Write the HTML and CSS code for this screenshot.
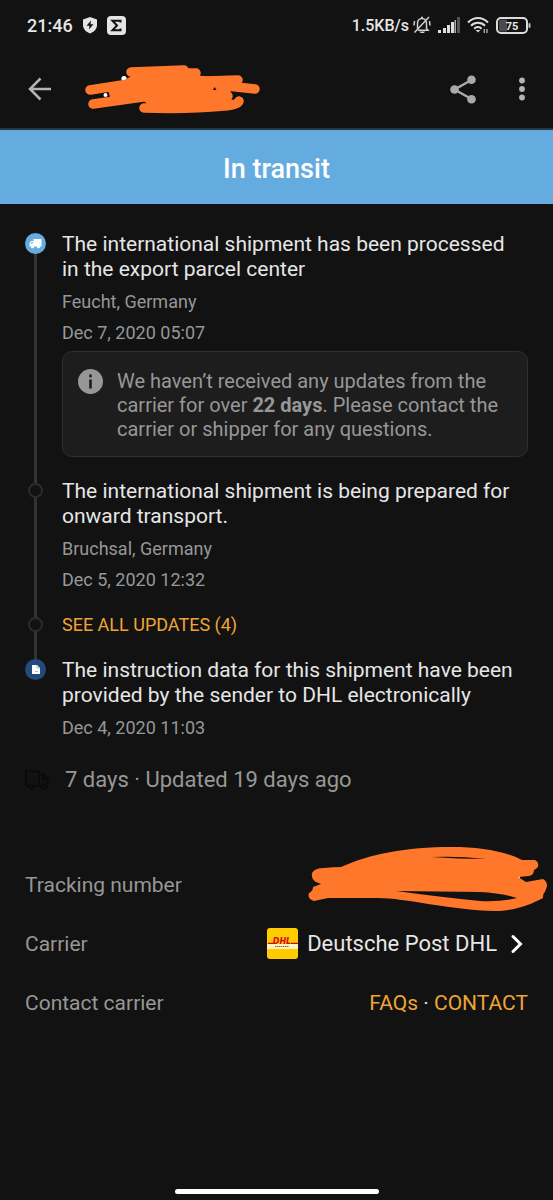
FILE: index.html
```html
<!DOCTYPE html>
<html lang="en">
<head>
<meta charset="utf-8">
<meta name="viewport" content="width=device-width, initial-scale=1">
<title>Shipment tracking</title>
<link rel="stylesheet" href="styles.css">
</head>
<body>
<div class="screen">
  <div class="statusbar">
    <div class="status-left">
      <span class="clock">21:46</span>
      <svg width="16" height="18" viewBox="0 0 16 18"><path d="M8 1 15 3.500V9c0 4-3 7-7 8.500C4 16 1 13 1 9V3.500Z" fill="#e4e4e4"/><path d="M9 4.500 4.500 9.800h3L7 13.500l4.500-5.300h-3Z" fill="#121212"/></svg>
      <svg width="19" height="19" viewBox="0 0 19 19"><rect width="19" height="19" rx="4" fill="#e4e4e4"/><path d="M13.500 6.500V4.800H5.500L10 9.500l-4.500 4.700h8v-1.700" fill="none" stroke="#121212" stroke-width="2"/></svg>
    </div>
    <div class="status-right">
      <span class="speed">1.5KB/s</span>
      <svg width="18" height="18" viewBox="0 0 18 18" fill="none" stroke="#cfcfcf" stroke-width="1.500"><path d="M4.500 12.500V7.500C4.500 4.500 6.500 2.500 9 2.500s4.500 2 4.500 5v5l1.500 1.700H5M8 1.500h2M16 1 1.500 16.500M1.500 5 1 9.500M16.500 5 17 9.500"/><path d="M6.500 15.500h5.500l-1 1.500H7.500Z" fill="#cfcfcf" stroke="none"/></svg>
      <svg width="22" height="16" viewBox="0 0 22 16"><g fill="#dedede"><rect x="0" y="13" width="3" height="3"/><rect x="5" y="11" width="3" height="5"/><rect x="9" y="8" width="3" height="8"/><rect x="13" y="5" width="3" height="11"/></g><rect x="16.500" y="3" width="1.500" height="13" fill="#aaa"/><rect x="19" y="0" width="3" height="16" fill="#555"/></svg>
      <svg width="22" height="18" viewBox="0 0 22 18" fill="none" stroke="#dedede" stroke-width="2"><path d="M1 6.500C7 .5 15 .5 21 6.500M4 9.700c4-4 10-4 14 0M7.200 12.700c2.200-2.200 5.200-2.200 7.400 0"/><path d="m8.700 14 2.300 2.500 2.300-2.500Z" fill="#dedede" stroke="none"/><path d="M17.300 13v4M20 13v4" stroke-width="1.400" stroke="#aaa"/></svg>
      <svg width="35" height="17" viewBox="0 0 35 17"><path d="M5 2.500h6v12H5Q3 14.500 3 12.500v-8Q3 2.500 5 2.500Z" fill="#4a4a4a"/><rect x="1" y="1" width="30" height="15" rx="4" fill="none" stroke="#dcdcdc" stroke-width="2"/><rect x="32.500" y="6" width="2" height="5" rx="1" fill="#bbb"/><text class="battery-text" x="16" y="12.500" text-anchor="middle">75</text></svg>
    </div>
  </div>

  <header class="appbar">
    <button class="icon-button" aria-label="Back"><svg width="24" height="24" viewBox="0 0 24 24" fill="none" stroke="#b4b4b4" stroke-width="2.500"><path d="M23 12H3M12.500 1.500 2 12l10.500 10.500"/></svg></button>
    <svg class="title-scribble" width="176" height="50" viewBox="85 65 176 50">
      <g fill="#fff"><circle cx="124" cy="79.500" r="2.600"/><circle cx="105.500" cy="96" r="2"/></g>
      <path d="M133 76H195L235 81 228 99 238 103 150 108 142 100 110 98 108 91Z" fill="#ff772a"/>
      <g fill="none" stroke="#ff772a" stroke-width="9.500" stroke-linecap="round" stroke-linejoin="round"><path d="M131 73 184 71M150 74h46M140 84l98-3M90 91l45-7M185 83l33 3 37 4M93 105l57-8M144 109c30 1 60 0 80-2q14-1 15-5M160 90l68 7"/></g>
      <path d="m214.500 88 2 3h-3.500Z" fill="#121212"/>
    </svg>
    <button class="icon-button push" aria-label="Share"><svg width="26" height="29" viewBox="0 0 26 29" fill="#a9a9a9"><path d="M21.500 5 4.500 14.500 21.500 24" fill="none" stroke="#a9a9a9" stroke-width="2.500"/><circle cx="21.500" cy="4.800" r="4.300"/><circle cx="4.500" cy="14.500" r="4.300"/><circle cx="21.500" cy="24.200" r="4.300"/></svg></button>
    <button class="icon-button more" aria-label="More options"><svg width="6" height="24" viewBox="0 0 6 24" fill="#b4b4b4"><circle cx="3" cy="3.500" r="2.900"/><circle cx="3" cy="12" r="2.900"/><circle cx="3" cy="20.500" r="2.900"/></svg></button>
  </header>

  <h1 class="banner">In transit</h1>

  <main class="content">
    <ol class="timeline">
      <li class="event">
        <div class="rail rail-first"><span class="dot dot-transit"><svg width="13" height="11" viewBox="0 0 13 11" fill="#fff"><path d="M4.500 1H12.500V8.500H.5V5.500L2 3H4.500Z"/><circle cx="3.500" cy="8.700" r="1.600"/><circle cx="9.500" cy="8.700" r="1.600"/><path d="M2.500 4h1.300v1.500H1.700Z" fill="#66acdf"/></svg></span></div>
        <div class="event-body">
          <h2>The international shipment has been processed in the export parcel center</h2>
          <p class="place">Feucht, Germany</p>
          <p class="date">Dec 7, 2020 05:07</p>
          <div class="note">
            <svg width="25" height="25" viewBox="0 0 25 25"><circle cx="12.500" cy="12.500" r="12.500" fill="#979797"/><rect x="11.200" y="10.500" width="2.600" height="9" fill="#1d1d1d"/><rect x="11.200" y="5.500" width="2.600" height="2.800" fill="#1d1d1d"/></svg>
            <p>We haven’t received any updates from the carrier for over <strong>22 days</strong>. Please contact the carrier or shipper for any questions.</p>
          </div>
        </div>
      </li>
      <li class="event">
        <div class="rail"><span class="dot dot-small"></span></div>
        <div class="event-body">
          <h2>The international shipment is being prepared for onward transport.</h2>
          <p class="place">Bruchsal, Germany</p>
          <p class="date">Dec 5, 2020 12:32</p>
        </div>
      </li>
      <li class="event">
        <div class="rail rail-link"><span class="dot dot-small"></span></div>
        <div class="event-body"><button class="see-all">SEE ALL UPDATES (4)</button></div>
      </li>
      <li class="event">
        <div class="rail rail-last"><span class="dot dot-data"><svg width="8" height="9" viewBox="0 0 8 9"><path d="M0 0h5l3 3v6H0Z" fill="#fff"/><path d="M5 0v3h3M3 6.500h3" fill="none" stroke="#8ba3c0" stroke-width=".7"/></svg></span></div>
        <div class="event-body event-final">
          <h2>The instruction data for this shipment have been provided by the sender to DHL electronically</h2>
          <p class="date">Dec 4, 2020 11:03</p>
        </div>
      </li>
    </ol>

    <p class="summary">
      <svg width="24" height="20" viewBox="0 0 24 20" fill="none" stroke="#0a0a0a" stroke-width="2"><path d="M4 16H1V1.500h13V16H9M14 4.500h4.500L22.500 9v7H21M14 16h2M18 5v4.500h4"/><circle cx="6.500" cy="16.500" r="2.300"/><circle cx="18.500" cy="16.500" r="2.300"/></svg>
      <span>7 days · Updated 19 days ago</span>
    </p>

    <dl class="details">
      <div class="row">
        <dt>Tracking number</dt>
        <dd class="redacted">
          <svg width="240" height="66" viewBox="308 847 240 66">
            <circle cx="518" cy="878" r="2" fill="#fff"/>
            <path fill="#ff772a" fill-rule="evenodd" d="M312 874Q315 869 324 869 333 868 341 868C370 855 405 848 452 848 480 848 504 852 522 861L535 861Q539 863 538 868 536 870 534 871 534 876 529 877L518 878 526 883 543 880Q547 882 547 887L545 893Q543 894 543 899C530 906 514 912 495 912 450 911 405 899 378 899H328L314 902Q307 900 309 894 313 892 313 888L321 885 316 883Q311 880 312 874ZM396 892Q440 898 480 902 501 903 517 899 501 894 480 893ZM431 858Q458 860 486 860 460 857 431 858Z"/>
          </svg>
        </dd>
      </div>
      <div class="row">
        <dt>Carrier</dt>
        <dd>
          <a class="carrier" href="#carrier">
            <svg width="31" height="31" viewBox="0 0 31 31"><rect width="31" height="31" rx="3" fill="#ffcc00"/><rect y="16" width="31" height="5" fill="#fff1c0"/><path d="M1 15.300h5M24 15.300h7" stroke="#d40511" stroke-width="1.200"/><text class="logo-text" x="15" y="16" text-anchor="middle">DHL</text><path d="M8 18.500h14" stroke="#c0504a" stroke-width="1" stroke-dasharray="1.500 .5"/></svg>
            <span>Deutsche Post DHL</span>
            <svg width="12" height="20" viewBox="0 0 12 20" fill="none" stroke="#fff" stroke-width="3" stroke-linecap="round"><path d="m2 2.500 7.500 7.500L2 17.500"/></svg>
          </a>
        </dd>
      </div>
      <div class="row">
        <dt>Contact carrier</dt>
        <dd class="contact"><a href="#faqs">FAQs</a> · <a href="#contact">CONTACT</a></dd>
      </div>
    </dl>
  </main>
  <div class="home-indicator"></div>
</div>
</body>
</html>
```

FILE: styles.css
```css
* { box-sizing: border-box; }
body { margin: 0; background: #121212; color: #e6e6e6; font-family: Roboto, "Liberation Sans", sans-serif; }
h1, h2, p, ol, dl, dd { margin: 0; padding: 0; }
ol { list-style: none; }
button { border: 0; padding: 0; background: none; color: inherit; font: inherit; cursor: pointer; }
a { color: inherit; text-decoration: none; }
svg { display: block; flex: none; }

.screen { min-height: 100vh; display: flex; flex-direction: column; }

.statusbar { height: 50px; padding: 0 22px 0 27px; display: flex; align-items: center; justify-content: space-between; font-weight: 500; }
.status-left { display: flex; align-items: center; gap: 9px; }
.status-right { display: flex; align-items: center; gap: 7px; }
.clock { font-size: 18px; }
.speed { font-size: 16px; margin-right: -3px; }
.battery-text { font-size: 11px; font-weight: 700; fill: #e6e6e6; }

.appbar { height: 80px; padding: 0 28px; display: flex; align-items: center; border-bottom: 2px solid #263845; }
.icon-button { display: flex; }
.title-scribble { margin-left: 33px; }
.push { margin-left: auto; }
.more { margin-left: 43px; }

.banner { padding: 24px 0 20px; background: #64acdf; color: #fff; font-size: 27px; font-weight: 500; line-height: 30px; text-align: center; }

.content { padding: 28px 25px 0; flex: 1; }
.event { display: grid; grid-template-columns: 21px 1fr; gap: 16px; }
.event-body { padding-bottom: 22px; }
.event-final { padding-bottom: 0; }
.rail { display: flex; justify-content: center; align-items: flex-start; padding-top: 1px; background: linear-gradient(#333, #333) center bottom / 3px 100% no-repeat; }
.rail-first { background-size: 3px calc(100% - 10px); }
.rail-last { background-position: center top; background-size: 3px 10px; }
.rail-link { padding-top: 0; }
.dot { display: flex; align-items: center; justify-content: center; width: 21px; height: 21px; border-radius: 50%; }
.dot-transit { background: #66acdf; }
.dot-data { background: #244a7a; }
.dot-small { width: 15px; height: 15px; margin-top: 3px; background: #121212; border: 2px solid #2c2c2c; }

h2 { padding-right: 8px; font-size: 21px; font-weight: 400; line-height: 25px; color: #e6e6e6; }
.place, .date { font-size: 18px; line-height: 24px; color: #979797; margin-top: 7px; }
.event h2 + p { margin-top: 8px; }
.note { margin-top: 6px; padding: 17px 15px 15px; display: flex; gap: 14px; background: #1d1d1d; border: 1px solid #303030; border-radius: 10px; color: #979797; font-size: 20px; line-height: 24px; }
.see-all { display: block; color: #efa534; font-size: 18px; line-height: 22px; }

.summary { margin-top: 28px; display: flex; align-items: center; gap: 16px; font-size: 22px; line-height: 24px; color: #979797; }

.details { margin-top: 63px; }
.row { display: flex; align-items: center; justify-content: space-between; font-size: 21px; line-height: 26px; min-height: 59px; }
dt { color: #979797; }
.redacted { margin: -9px -20px 2px 0; }
.carrier { display: flex; align-items: center; gap: 9px; font-size: 22px; }
.carrier svg:last-child { margin: 0 5px; }
.logo-text { font-family: "DejaVu Sans", sans-serif; font-size: 8px; font-weight: 700; font-style: italic; fill: #d40511; }
.contact a { color: #efa534; }

.home-indicator { width: 204px; height: 5px; margin: 0 auto 6px; border-radius: 3px; background: #fff; }
```
